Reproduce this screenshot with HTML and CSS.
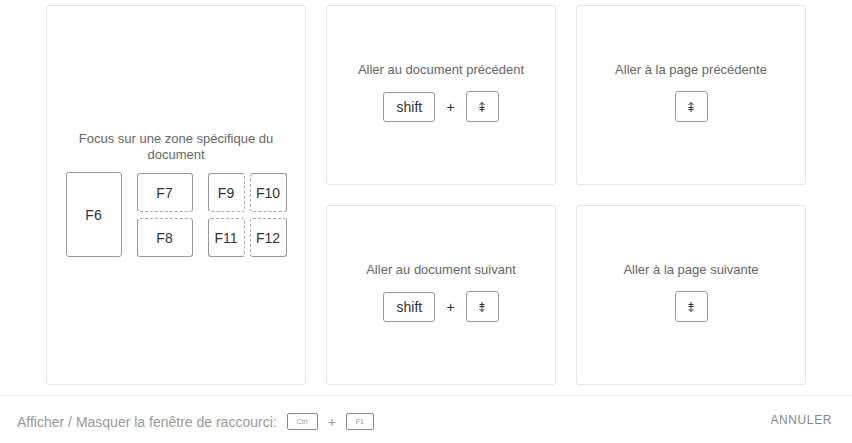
FILE: index.html
```html
<!DOCTYPE html>
<html lang="fr">
<head>
<meta charset="utf-8">
<link rel="stylesheet" href="styles.css">
</head>
<body>
<main class="grid">
  <section class="card card-tall">
    <div class="title title-wrap">Focus sur une zone spécifique du document</div>
    <div class="fkeys">
      <div class="key fk f6">F6</div>
      <div class="fcol">
        <div class="key fk f7">F7</div>
        <div class="key fk f8">F8</div>
      </div>
      <div class="fquad">
        <div class="key fk f9">F9</div>
        <div class="key fk f10">F10</div>
        <div class="key fk f11">F11</div>
        <div class="key fk f12">F12</div>
      </div>
    </div>
  </section>
  <section class="card">
    <div class="title">Aller au document précédent</div>
    <div class="combo">
      <div class="key shift">shift</div>
      <span class="plus">+</span>
      <div class="key arrow">
        <svg width="8" height="12" viewBox="0 0 8 12"><path d="M4 1.5V11M1.5 4L4 1.5L6.5 4M1.5 6.5H6.5M1.5 8.5H6.5" fill="none" stroke="#333" stroke-width="1"/></svg>
      </div>
    </div>
  </section>
  <section class="card">
    <div class="title">Aller à la page précédente</div>
    <div class="combo">
      <div class="key arrow">
        <svg width="8" height="12" viewBox="0 0 8 12"><path d="M4 1.5V11M1.5 4L4 1.5L6.5 4M1.5 6.5H6.5M1.5 8.5H6.5" fill="none" stroke="#333" stroke-width="1"/></svg>
      </div>
    </div>
  </section>
  <section class="card">
    <div class="title">Aller au document suivant</div>
    <div class="combo">
      <div class="key shift">shift</div>
      <span class="plus">+</span>
      <div class="key arrow">
        <svg width="8" height="12" viewBox="0 0 8 12"><path d="M4 1V10.5M1.5 8L4 10.5L6.5 8M1.5 3.5H6.5M1.5 5.5H6.5" fill="none" stroke="#333" stroke-width="1"/></svg>
      </div>
    </div>
  </section>
  <section class="card">
    <div class="title">Aller à la page suivante</div>
    <div class="combo">
      <div class="key arrow">
        <svg width="8" height="12" viewBox="0 0 8 12"><path d="M4 1V10.5M1.5 8L4 10.5L6.5 8M1.5 3.5H6.5M1.5 5.5H6.5" fill="none" stroke="#333" stroke-width="1"/></svg>
      </div>
    </div>
  </section>
</main>
<footer class="footer">
  <div class="toggle">
    <span>Afficher / Masquer la fenêtre de raccourci:</span>
    <span class="mini mini-ctrl">Ctrl</span>
    <span class="mini-plus">+</span>
    <span class="mini mini-f1">F1</span>
  </div>
  <button class="cancel">ANNULER</button>
</footer>
</body>
</html>
```
FILE: styles.css
```css
* { box-sizing: border-box; }
html, body { margin: 0; padding: 0; background: #fff; }
body {
  width: 852px;
  height: 443px;
  font-family: "Liberation Sans", Arial, sans-serif;
  color: #333;
  overflow: hidden;
}
.grid {
  display: grid;
  grid-template-columns: 260px 230px 230px;
  grid-template-rows: 180px 180px;
  gap: 20px;
  padding: 5px 0 0 46px;
}
.card {
  border: 1px solid #e6e6e6;
  border-radius: 3px;
  display: flex;
  flex-direction: column;
  align-items: center;
  justify-content: center;
  padding-bottom: 6px;
}
.card-tall { grid-row: 1 / 3; padding-bottom: 2px; }
.title {
  font-size: 13px;
  line-height: 16px;
  color: #666;
  text-align: center;
}
.title-wrap { max-width: 210px; }
.combo {
  display: flex;
  align-items: center;
  margin-top: 13px;
}
.key {
  border: 1px solid #999;
  border-radius: 3px;
  display: flex;
  align-items: center;
  justify-content: center;
  font-size: 14px;
  color: #333;
  background: #fff;
}
.shift { width: 52px; height: 30px; }
.arrow { width: 33px; height: 31px; }
.plus { font-size: 14px; color: #333; margin: 0 11px 0 11px; }
.fkeys {
  display: flex;
  gap: 15px;
  margin-top: 9px;
}
.f6 { width: 56px; height: 85px; }
.fcol { display: flex; flex-direction: column; gap: 6px; padding-top: 1px; }
.f7, .f8 { width: 56px; height: 39px; }
.fquad {
  display: grid;
  grid-template-columns: 37px 37px;
  grid-template-rows: 39px 39px;
  gap: 6px 5px;
  padding-top: 1px;
}
.f7 { border-bottom-style: dashed; border-bottom-color: #aaa; }
.f8 { border-top-style: dashed; border-top-color: #aaa; }
.f9 { border-right-style: dashed; border-bottom-style: dashed; border-right-color: #aaa; border-bottom-color: #aaa; }
.f10 { border-left-style: dashed; border-bottom-style: dashed; border-left-color: #aaa; border-bottom-color: #aaa; }
.f11 { border-right-style: dashed; border-top-style: dashed; border-right-color: #aaa; border-top-color: #aaa; }
.f12 { border-left-style: dashed; border-top-style: dashed; border-left-color: #aaa; border-top-color: #aaa; }
.footer {
  margin-top: 10px;
  border-top: 1px solid #ebebeb;
  height: 48px;
  display: flex;
  align-items: center;
  justify-content: space-between;
  padding: 0 20px 0 17px;
}
.toggle {
  display: flex;
  align-items: center;
  font-size: 14px;
  color: #999;
  padding-top: 4px;
}
.mini {
  display: inline-flex;
  align-items: center;
  justify-content: center;
  border: 1px solid #888;
  border-radius: 2px;
  height: 17px;
  font-size: 7px;
  color: #999;
}
.mini-ctrl { width: 31px; margin-left: 10px; }
.mini-f1 { width: 28px; }
.mini-plus { margin: 0 10px 0 10px; color: #999; font-size: 14px; }
.cancel {
  border: none;
  background: none;
  padding: 0;
  font-family: "Liberation Sans", Arial, sans-serif;
  font-size: 12px;
  letter-spacing: 0.6px;
  color: #888;
}
```
